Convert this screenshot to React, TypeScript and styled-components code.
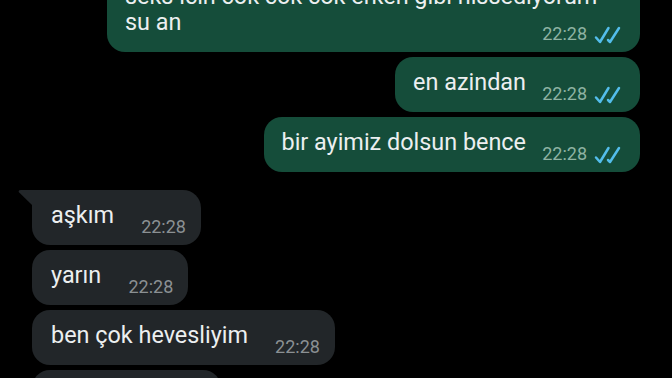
import React from "react";
import styled, { createGlobalStyle, css } from "styled-components";

const Global = createGlobalStyle`
  html, body { margin: 0; padding: 0; background: #000; }
  body { width: 672px; height: 378px; overflow: hidden; font-family: Roboto, "Noto Sans", sans-serif; }
`;

const Screen = styled.div`
  width: 672px;
  height: 378px;
  overflow: hidden;
  background: #000;
`;

const Chat = styled.div`
  display: flex;
  flex-direction: column;
  margin-top: -29px;
`;

const Group = styled.div<{ $out?: boolean; $gapTop?: number }>`
  display: flex;
  flex-direction: column;
  gap: 5px;
  align-items: ${(p) => (p.$out ? "flex-end" : "flex-start")};
  padding: 0 32px;
  margin-top: ${(p) => p.$gapTop ?? 0}px;
`;

const Bubble = styled.div<{ $out?: boolean; $tail?: boolean; $full?: boolean }>`
  position: relative;
  display: grid;
  box-sizing: border-box;
  max-width: 533px;
  width: ${(p) => (p.$full ? "533px" : "auto")};
  padding: 12px 16px 8px 18px;
  border-radius: 18px;
  background: ${(p) => (p.$out ? "#154d3a" : "#222629")};
  ${(p) =>
    !p.$out &&
    css`
      padding: 12px 15px 8px 19px;
    `}
  ${(p) =>
    p.$tail &&
    css`
      border-top-left-radius: 0;
    `}
`;

const Text = styled.div`
  grid-area: 1 / 1;
  font-size: 23.4px;
  line-height: 26px;
  color: #eceff0;
  padding-bottom: 9px;
  white-space: pre-wrap;
`;

const Spacer = styled.span<{ $w: number }>`
  display: inline-block;
  width: ${(p) => p.$w}px;
`;

const Meta = styled.div`
  grid-area: 1 / 1;
  justify-self: end;
  align-self: end;
  display: flex;
  align-items: center;
  gap: 7px;
  height: 20px;
`;

const Time = styled.span<{ $out?: boolean }>`
  font-size: 18px;
  line-height: 20px;
  color: ${(p) => (p.$out ? "#8eb3a3" : "#8b9093")};
`;

const Ticks = styled.svg`
  width: 30px;
  height: 18px;
  margin-top: 1px;
`;

const Tail = styled.svg`
  position: absolute;
  left: -14px;
  top: 0;
  width: 14px;
  height: 16px;
`;

const DoubleCheck = () => (
  <Ticks viewBox="0 0 30 18" fill="none" stroke="#53bdeb" strokeWidth={2.5} strokeLinecap="round" strokeLinejoin="round">
    <path d="M2 11.5 L6 16 L14.5 2" />
    <path d="M14 14 L16 16 L25 2" />
  </Ticks>
);

type Msg = { text: string; out?: boolean; tail?: boolean; full?: boolean };

const Message = ({ text, out, tail, full }: Msg) => (
  <Bubble $out={out} $tail={tail} $full={full}>
    {tail && (
      <Tail viewBox="0 0 14 16">
        <path d="M3 0 H14 V15 L1.2 2.6 Q-0.5 0 3 0 Z" fill="#222629" />
      </Tail>
    )}
    <Text>
      {text}
      <Spacer $w={out ? 98 : 72} />
    </Text>
    <Meta>
      <Time $out={out}>22:28</Time>
      {out && <DoubleCheck />}
    </Meta>
  </Bubble>
);

export default function App() {
  return (
    <Screen>
      <Global />
      <Chat>
        <Group $out>
          <Message out full text={"seks icin cok cok cok erken gibi hissediyorum\nsu an"} />
          <Message out text="en azindan" />
          <Message out text="bir ayimiz dolsun bence" />
        </Group>
        <Group $gapTop={18}>
          <Message tail text="aşkım" />
          <Message text="yarın" />
          <Message text="ben çok hevesliyim" />
          <Message text="hayatım" />
        </Group>
      </Chat>
    </Screen>
  );
}
